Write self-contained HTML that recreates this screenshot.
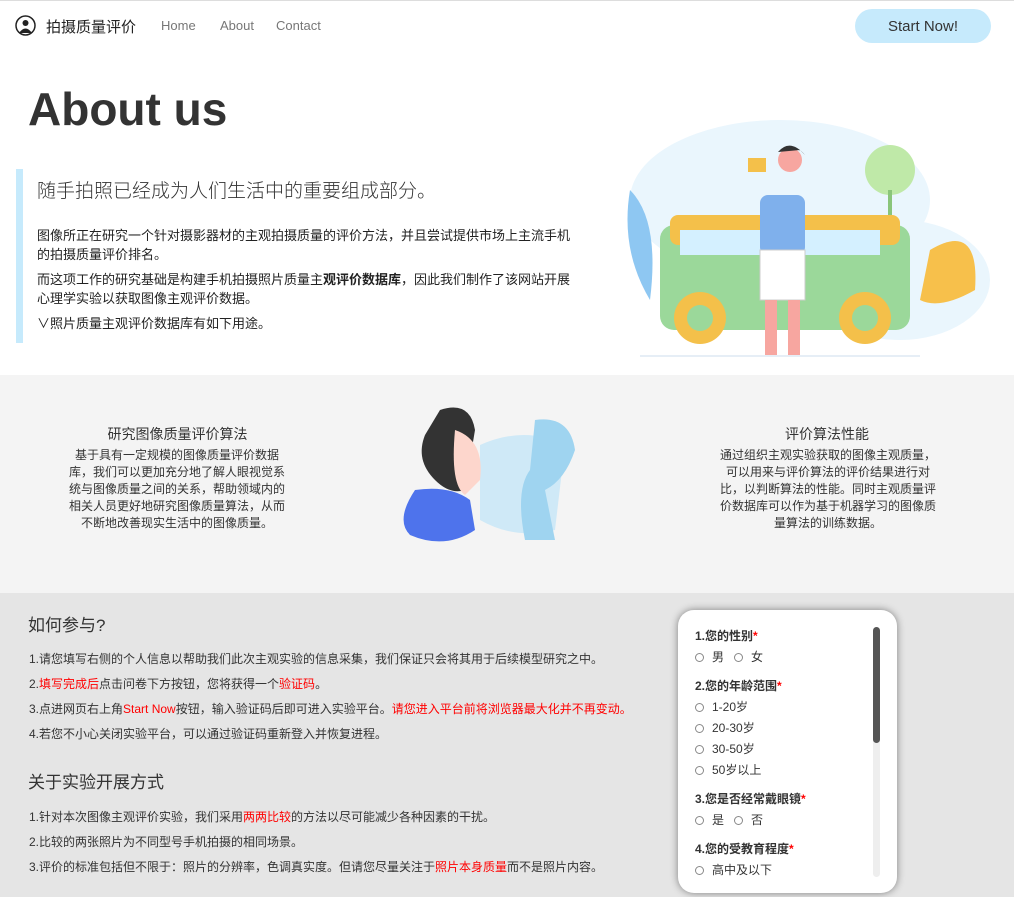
<!DOCTYPE html>
<html><head><meta charset="utf-8">
<style>
*{margin:0;padding:0;box-sizing:border-box}
body{width:1014px;height:897px;overflow:hidden;background:#fff;font-family:"Liberation Sans","Noto Sans CJK SC",sans-serif;color:#222;position:relative}
.abs{position:absolute}
.nav a{color:#777;font-size:13px;text-decoration:none;position:absolute;top:18px}
p{font-size:13px;line-height:19px}
.s3 p{font-size:12px;color:#333;position:absolute;left:29px}
.r{color:#f00}
.q{position:absolute;left:695px;font-size:12px;font-weight:bold;color:#333}
.o{position:absolute;left:695px;font-size:12px;color:#333}
.o i{display:inline-block;width:9px;height:9px;border:1px solid #888;border-radius:50%;margin-right:8px;vertical-align:-1px}
</style></head><body>
<div class="abs" style="left:0;top:0;width:1014px;height:1px;background:#ddd"></div>
<svg class="abs" style="left:15px;top:15px" width="21" height="21" viewBox="0 0 21 21"><circle cx="10.5" cy="10.5" r="9.5" fill="#fff" stroke="#222" stroke-width="1.5"/><circle cx="10.5" cy="8" r="3" fill="#222"/><path d="M4 18 Q10.5 9 17 18Z" fill="#222"/></svg>
<div class="abs" style="left:46px;top:16px;font-size:15px;color:#222">拍摄质量评价</div>
<div class="nav"><a style="left:161px">Home</a><a style="left:220px">About</a><a style="left:276px">Contact</a></div>
<div class="abs" style="left:855px;top:9px;width:136px;height:34px;border-radius:17px;background:#c6eafc;color:#333;font-size:15px;text-align:center;padding-top:9px;line-height:17px">Start Now!</div>
<div class="abs" style="left:28px;top:82px;font-size:46px;font-weight:bold;color:#333">About us</div>
<div class="abs" style="left:16px;top:169px;width:7px;height:174px;background:#c6eafc"></div>
<div class="abs" style="left:37px;top:176px;font-size:19px;color:#333;font-weight:300">随手拍照已经成为人们生活中的重要组成部分。</div>
<div class="abs" style="left:37px;top:226px;width:540px">
<p>图像所正在研究一个针对摄影器材的主观拍摄质量的评价方法，并且尝试提供市场上主流手机的拍摄质量评价排名。</p>
<p style="margin-top:6px">而这项工作的研究基础是构建手机拍摄照片质量主<b>观评价数据库</b>，因此我们制作了该网站开展心理学实验以获取图像主观评价数据。</p>
<p style="margin-top:6px">∨照片质量主观评价数据库有如下用途。</p>
</div>
<svg class="abs" style="left:600px;top:100px" width="400" height="275" viewBox="0 0 400 275">
<ellipse cx="180" cy="100" rx="150" ry="80" fill="#eaf6fd"/>
<ellipse cx="300" cy="180" rx="90" ry="60" fill="#eaf6fd"/>
<path d="M30 90 Q60 120 50 200 Q20 150 30 90Z" fill="#8ec7f2"/>
<circle cx="290" cy="70" r="25" fill="#bfe9a8"/><rect x="288" y="90" width="4" height="50" fill="#8ac57a"/>
<path d="M330 150 Q380 120 375 190 Q340 210 320 200Z" fill="#f7c04b"/>
<rect x="60" y="125" width="250" height="105" rx="14" fill="#9bd89a"/>
<rect x="70" y="115" width="230" height="30" rx="8" fill="#f4c04a"/>
<rect x="80" y="130" width="200" height="25" fill="#d4f0ff"/>
<circle cx="100" cy="218" r="26" fill="#f4c04a"/><circle cx="100" cy="218" r="13" fill="#9bd89a"/>
<circle cx="265" cy="218" r="26" fill="#f4c04a"/><circle cx="265" cy="218" r="13" fill="#9bd89a"/>
<rect x="160" y="95" width="45" height="60" rx="8" fill="#7fb0ec"/>
<rect x="160" y="150" width="45" height="50" fill="#fff" stroke="#ccc"/>
<rect x="165" y="200" width="12" height="55" fill="#f7a6a0"/><rect x="188" y="200" width="12" height="55" fill="#f7a6a0"/>
<circle cx="190" cy="60" r="12" fill="#f7a6a0"/><path d="M178 52 Q190 38 205 55 L200 50Z" fill="#333"/>
<rect x="148" y="58" width="18" height="14" fill="#f4c04a"/>
<path d="M40 256 H320" stroke="#cde" stroke-width="1"/>
</svg>
<div class="abs" style="left:0;top:375px;width:1014px;height:218px;background:#f4f4f4"></div>
<div class="abs" style="left:60px;top:424px;width:235px;text-align:center;font-size:14px;color:#333">研究图像质量评价算法</div>
<div class="abs" style="left:68px;top:447px;width:218px;text-align:center;font-size:12px;line-height:17px;color:#333">基于具有一定规模的图像质量评价数据库，我们可以更加充分地了解人眼视觉系统与图像质量之间的关系，帮助领域内的相关人员更好地研究图像质量算法，从而不断地改善现实生活中的图像质量。</div>
<div class="abs" style="left:707px;top:424px;width:240px;text-align:center;font-size:14px;color:#333">评价算法性能</div>
<div class="abs" style="left:716px;top:447px;width:224px;text-align:center;font-size:12px;line-height:17px;color:#333">通过组织主观实验获取的图像主观质量，<br>可以用来与评价算法的评价结果进行对比，以判断算法的性能。同时主观质量评价数据库可以作为基于机器学习的图像质量算法的训练数据。</div>
<svg class="abs" style="left:395px;top:400px" width="200" height="150" viewBox="0 0 200 150">
<path d="M85 45 Q130 25 170 45 L160 130 Q120 140 85 120Z" fill="#cfe9f7"/>
<path d="M140 20 Q175 15 180 50 Q170 80 150 90 L160 140 L130 140 Q120 90 135 70Z" fill="#9fd4f0"/>
<path d="M45 10 Q75 0 80 30 L70 90 Q55 95 40 80 Q20 60 30 35Z" fill="#333"/>
<path d="M60 30 Q90 40 85 80 L70 95 Q55 85 60 30Z" fill="#fdd6cc"/>
<path d="M20 90 Q55 85 75 100 L80 130 Q50 150 15 135 Q0 120 20 90Z" fill="#4e73ec"/>
</svg>
<div class="abs" style="left:0;top:593px;width:1014px;height:304px;background:#e5e5e5"></div>
<div class="s3">
<div class="abs" style="left:28px;top:611px;font-size:17px;color:#333">如何参与?</div>
<p style="top:650px">1.请您填写右侧的个人信息以帮助我们此次主观实验的信息采集，我们保证只会将其用于后续模型研究之中。</p>
<p style="top:675px">2.<span class="r">填写完成后</span>点击问卷下方按钮，您将获得一个<span class="r">验证码</span>。</p>
<p style="top:700px">3.点进网页右上角<span class="r">Start Now</span>按钮，输入验证码后即可进入实验平台。<span class="r">请您进入平台前将浏览器最大化并不再变动。</span></p>
<p style="top:725px">4.若您不小心关闭实验平台，可以通过验证码重新登入并恢复进程。</p>
<div class="abs" style="left:28px;top:768px;font-size:17px;color:#333">关于实验开展方式</div>
<p style="top:808px">1.针对本次图像主观评价实验，我们采用<span class="r">两两比较</span>的方法以尽可能减少各种因素的干扰。</p>
<p style="top:833px">2.比较的两张照片为不同型号手机拍摄的相同场景。</p>
<p style="top:858px">3.评价的标准包括但不限于：照片的分辨率，色调真实度。但请您尽量关注于<span class="r">照片本身质量</span>而不是照片内容。</p>
</div>
<div class="abs" style="left:678px;top:610px;width:219px;height:283px;background:#fff;border-radius:16px;box-shadow:0 0 8px rgba(0,0,0,.45)"></div>
<div class="abs" style="left:873px;top:627px;width:7px;height:250px;background:#eee;border-radius:4px"></div>
<div class="abs" style="left:873px;top:627px;width:7px;height:116px;background:#555;border-radius:4px"></div>
<div class="q" style="top:627px">1.您的性别<span class="r">*</span></div>
<div class="o" style="top:648px"><i></i>男 &nbsp;&nbsp;<i></i>女</div>
<div class="q" style="top:677px">2.您的年龄范围<span class="r">*</span></div>
<div class="o" style="top:698px"><i></i>1-20岁</div>
<div class="o" style="top:719px"><i></i>20-30岁</div>
<div class="o" style="top:740px"><i></i>30-50岁</div>
<div class="o" style="top:761px"><i></i>50岁以上</div>
<div class="q" style="top:790px">3.您是否经常戴眼镜<span class="r">*</span></div>
<div class="o" style="top:811px"><i></i>是 &nbsp;&nbsp;<i></i>否</div>
<div class="q" style="top:840px">4.您的受教育程度<span class="r">*</span></div>
<div class="o" style="top:861px"><i></i>高中及以下</div>
</body></html>
